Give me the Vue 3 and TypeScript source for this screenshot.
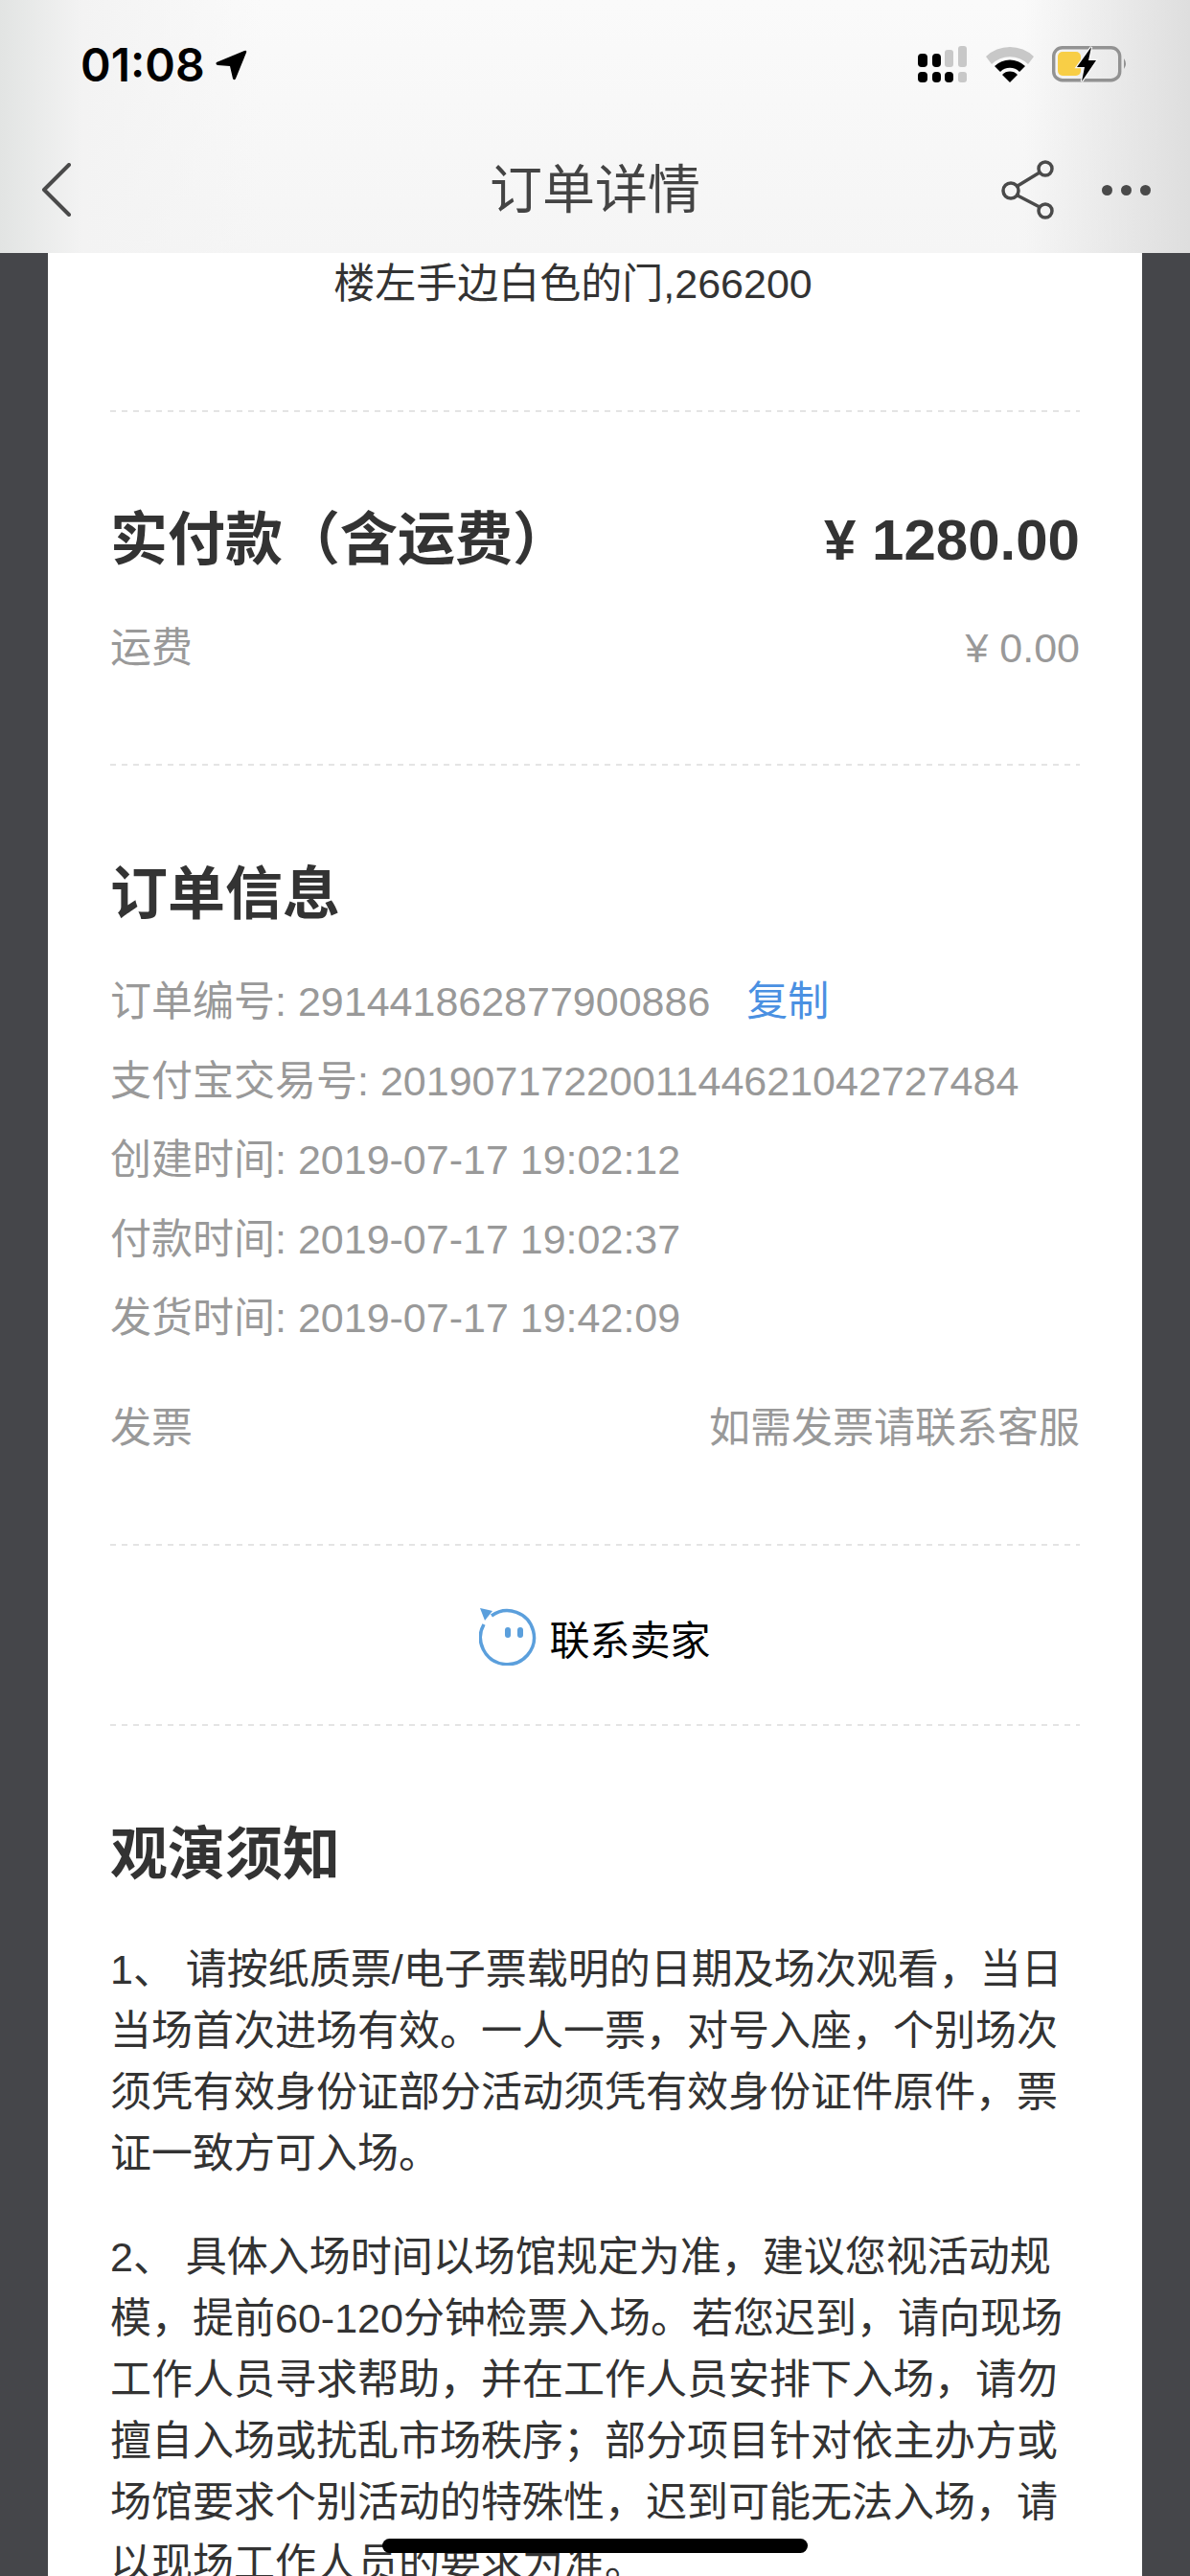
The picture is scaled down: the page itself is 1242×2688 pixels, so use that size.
<script setup lang="ts">
const orderRows: { label: string; value: string; copy?: boolean }[] = [
  { label: '订单编号', value: '291441862877900886', copy: true },
  { label: '支付宝交易号', value: '2019071722001144621042727484' },
  { label: '创建时间', value: '2019-07-17 19:02:12' },
  { label: '付款时间', value: '2019-07-17 19:02:37' },
  { label: '发货时间', value: '2019-07-17 19:42:09' },
]
const notice: string[] = [
  '1、 请按纸质票/电子票载明的日期及场次观看，当日当场首次进场有效。一人一票，对号入座，个别场次须凭有效身份证部分活动须凭有效身份证件原件，票证一致方可入场。',
  '2、 具体入场时间以场馆规定为准，建议您视活动规模，提前60-120分钟检票入场。若您迟到，请向现场工作人员寻求帮助，并在工作人员安排下入场，请勿擅自入场或扰乱市场秩序；部分项目针对依主办方或场馆要求个别活动的特殊性，迟到可能无法入场，请以现场工作人员的要求为准。',
]
</script>

<template>
  <div class="page">
    <header class="top">
      <div class="status">
        <div class="clock">
          <span>01:08</span>
          <svg width="33" height="32" viewBox="0 0 33 32"><path d="M1 13 L30 1 Q33 0 32 3 L21 30 Q19.500 32.500 18 30 L15 17 L2 16 Q-0.500 15 1 13 Z" fill="#000" /></svg>
        </div>
        <div class="sys">
          <svg width="52" height="38" viewBox="0 0 52 38">
            <g fill="#000">
              <rect x="0" y="8" width="10" height="14" rx="4" /><rect x="15" y="8" width="9" height="14" rx="4" />
              <rect x="0" y="27" width="10" height="11" rx="4" /><rect x="15" y="27" width="9" height="11" rx="4" /><rect x="28" y="27" width="9" height="11" rx="4" />
            </g>
            <g fill="#c8c8c8">
              <rect x="28" y="4" width="9" height="18" rx="3" /><rect x="42" y="0" width="9" height="22" rx="3" /><rect x="42" y="27" width="9" height="11" rx="3" />
            </g>
          </svg>
          <svg width="50" height="38" viewBox="0 0 50 38">
            <path d="M0 11 A36 36 0 0 1 50 11 L44 19 A27 27 0 0 0 6 19 Z" fill="#c8c8c8" />
            <path d="M9 21 A23 23 0 0 1 41 21 L35 27 A14 14 0 0 0 15 27 Z" fill="#000" />
            <path d="M17 30 A11 11 0 0 1 33 30 L25 38 Z" fill="#000" />
          </svg>
          <svg width="79" height="38" viewBox="0 0 79 38">
            <rect x="1.700" y="1.700" width="69" height="34" rx="9" fill="none" stroke="#929292" stroke-width="3.400" />
            <rect x="6" y="6" width="24" height="25" rx="5" fill="#f8ce46" />
            <path d="M75 13 Q79 18.500 75 24 Z" fill="#929292" />
            <path d="M41 1 L26 22 L34 22 L31 37 L46 15 L38 15 Z" fill="#000" stroke="#f7f7f7" stroke-width="2.500" paint-order="stroke" />
          </svg>
        </div>
      </div>
      <nav class="nav">
        <svg width="32" height="56" viewBox="0 0 32 56"><path d="M29 2 L3 28 L29 54" fill="none" stroke="#4a4a4a" stroke-width="4" stroke-linecap="round" stroke-linejoin="round" /></svg>
        <h1 class="title">订单详情</h1>
        <div class="actions">
          <svg width="56" height="62" viewBox="0 0 56 62" fill="none" stroke="#4a4a4a" stroke-width="3.500">
            <circle cx="10" cy="32" r="8" /><circle cx="46" cy="9" r="7" /><circle cx="46" cy="53" r="7" />
            <path d="M17 27 L40 13 M17 37 L40 49" />
          </svg>
          <div class="dots"><i></i><i></i><i></i></div>
        </div>
      </nav>
    </header>

    <main class="card">
      <p class="addr">楼左手边白色的门,266200</p>
      <div class="rule"></div>
      <section class="pay">
        <div class="between strong"><span>实付款（含运费）</span><span>¥ 1280.00</span></div>
        <div class="between muted"><span>运费</span><span>¥ 0.00</span></div>
      </section>
      <div class="rule"></div>
      <section class="info">
        <h2>订单信息</h2>
        <div class="rows">
          <div v-for="row in orderRows" :key="row.label" class="row">
            {{ row.label }}: {{ row.value }}<span v-if="row.copy" class="copy">复制</span>
          </div>
        </div>
        <div class="between muted invoice"><span>发票</span><span>如需发票请联系客服</span></div>
      </section>
      <div class="rule"></div>
      <div class="contact">
        <svg width="60" height="60" viewBox="0 0 60 60">
          <path d="M13 8 A28 28 0 1 1 5 17" fill="none" stroke="#5b9fdc" stroke-width="3.500" />
          <path d="M1 0 L14 3 L6 13 Z" fill="#5b9fdc" />
          <rect x="27" y="20" width="6" height="11" rx="3" fill="#5b9fdc" />
          <rect x="40" y="20" width="6" height="11" rx="3" fill="#5b9fdc" />
        </svg>
        <span>联系卖家</span>
      </div>
      <div class="rule"></div>
      <section class="notice">
        <h2>观演须知</h2>
        <p v-for="(text, i) in notice" :key="i">{{ text }}</p>
      </section>
    </main>
    <div class="home"></div>
  </div>
</template>

<style scoped>
.page {
  position: relative;
  width: 1242px;
  height: 2688px;
  overflow: hidden;
  background: #45464a;
  font-family: "Liberation Sans", "Noto Sans CJK SC", sans-serif;
}
.top {
  height: 264px;
  box-sizing: border-box;
  padding-top: 48px;
  background:
    linear-gradient(90deg, #e2e4e3 0%, #f3f3f3 7%, rgba(247, 247, 247, 0) 22%, rgba(247, 247, 247, 0) 86%, #dedede 100%),
    linear-gradient(180deg, #fafafa, #f5f5f5);
}
.status {
  height: 38px;
  display: flex;
  justify-content: space-between;
  align-items: center;
  padding: 0 65px 0 84px;
}
.clock {
  display: flex;
  align-items: center;
  gap: 11px;
  margin-top: 2px;
  font-family: "Inter", "Liberation Sans", sans-serif;
  font-size: 48px;
  font-weight: 600;
  line-height: 38px;
  color: #000;
}
.sys {
  display: flex;
  align-items: center;
  gap: 19px;
}
.sys svg, .clock svg { display: block; }
.nav {
  position: relative;
  height: 66px;
  margin-top: 79px;
  display: flex;
  justify-content: space-between;
  align-items: center;
  padding: 0 41px 0 43px;
}
.title {
  position: absolute;
  left: 0;
  right: 0;
  margin: 0;
  text-align: center;
  font-size: 55px;
  font-weight: 400;
  line-height: 66px;
  color: #444;
}
.actions {
  display: flex;
  align-items: center;
  gap: 49px;
}
.dots {
  display: flex;
  gap: 9px;
}
.dots i {
  width: 11px;
  height: 11px;
  border-radius: 50%;
  background: #4a4a4a;
}
.card {
  height: 2424px;
  margin: 0 50px;
  padding: 0 65px;
  box-sizing: border-box;
  background: #fff;
  color: #333;
}
.addr {
  margin: 0;
  padding: 0 46px 100px 0;
  text-align: center;
  font-size: 43px;
  line-height: 64px;
}
.rule {
  height: 2px;
  background: repeating-linear-gradient(90deg, #e4e4e4 0 6px, transparent 6px 12px);
}
.between {
  display: flex;
  justify-content: space-between;
  align-items: center;
}
.strong {
  font-size: 60px;
  font-weight: 700;
  line-height: 84px;
}
.muted {
  font-size: 43px;
  line-height: 60px;
  color: #999;
}
.pay { padding: 92px 0 91px; }
.pay .muted { margin-top: 40px; }
h2 {
  margin: 0;
  font-size: 60px;
  font-weight: 700;
  line-height: 84px;
  color: #333;
}
.info { padding: 93px 0 91px; }
.rows { margin-top: 28px; }
.row {
  font-size: 43px;
  line-height: 82.500px;
  color: #999;
}
.copy {
  margin-left: 38px;
  color: #4a90e2;
}
.invoice { margin-top: 43px; }
.contact {
  height: 186px;
  box-sizing: border-box;
  padding-top: 5px;
  display: flex;
  justify-content: center;
  align-items: center;
  gap: 13px;
  font-size: 42px;
  color: #000;
}
.notice { padding-top: 93px; }
.notice p {
  margin: 44px 0 0;
  font-size: 43px;
  line-height: 64px;
  color: #333;
}
.notice h2 + p { margin-top: 45px; }
.home {
  position: absolute;
  left: 399px;
  top: 2649px;
  width: 444px;
  height: 15px;
  border-radius: 8px;
  background: #000;
}
</style>
